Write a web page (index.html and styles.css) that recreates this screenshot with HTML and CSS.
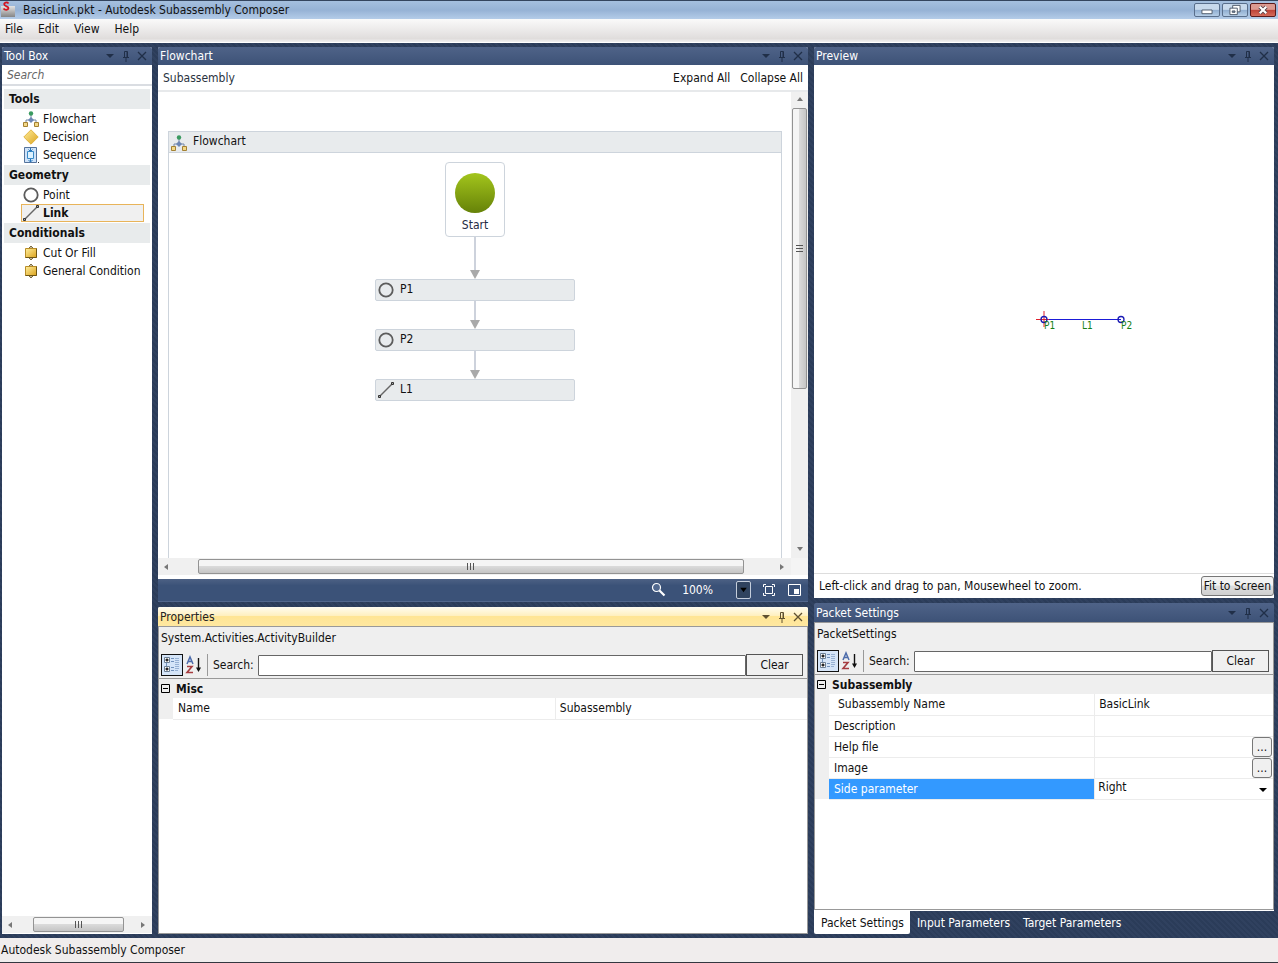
FILE: index.html
```
<!DOCTYPE html>
<html lang="en">
<head>
<meta charset="utf-8">
<title>BasicLink.pkt - Autodesk Subassembly Composer</title>
<link rel="stylesheet" href="styles.css">
</head>
<body>
<svg class="defs" aria-hidden="true">
  <defs>
    <linearGradient id="gold" x1="0" y1="0" x2="1" y2="1"><stop offset="0" stop-color="#ffee9c"/><stop offset="1" stop-color="#dba21c"/></linearGradient>
    <linearGradient id="green" x1="0" y1="0" x2="0" y2="1"><stop offset="0" stop-color="#a3c51c"/><stop offset="1" stop-color="#668208"/></linearGradient>
    <linearGradient id="grey" x1="0" y1="0" x2="0" y2="1"><stop offset="0" stop-color="#e4e4e4"/><stop offset="1" stop-color="#858585"/></linearGradient>
  </defs>
  <symbol id="i-flow" viewBox="0 0 16 16"><path d="M8 3v6M8 9H3v4M8 9h5v4" fill="none" stroke="#7488a8"/><circle cx="8" cy="2.500" r="2.200" fill="#3a9a60"/><path d="M8 6l3 3-3 3-3-3z" fill="#6d86b4"/><path d="M.5 11.500h4v4h-4zM11.500 11.500h4v4h-4z" fill="#f3d888" stroke="#a48132"/></symbol>
  <symbol id="i-decision" viewBox="0 0 16 16"><path d="M8 .8L15.200 8 8 15.200.8 8z" fill="url(#gold)" stroke="#dba92c" stroke-width=".8"/></symbol>
  <symbol id="i-sequence" viewBox="0 0 16 16"><path d="M1.500.5h12v15h-12z" fill="#d0e3f8" stroke="#54739c"/><path d="M4.500 4.500h6v7h-6z" fill="#def2ff" stroke="#3a8bc8"/><path d="M7.500 1v3M7.500 12v3M5.500 13l2 2 2-2M5.500 2.500l2 2 2-2" fill="none" stroke="#2878bd"/><path d="M15 15h1v1h-1z" fill="#333"/></symbol>
  <symbol id="i-point" viewBox="0 0 16 16"><circle cx="8" cy="8" r="6.700" fill="none" stroke="#5c5c5c" stroke-width="1.800"/></symbol>
  <symbol id="i-link" viewBox="0 0 16 16"><path d="M2 14L14 2" stroke="#666" stroke-width="1.400"/><path d="M.5 13.500h2v2h-2zM13.500.5h2v2h-2z" fill="#aaa" stroke="#333"/></symbol>
  <symbol id="i-cond" viewBox="0 0 16 16"><path d="M8 1v14M6 3l2-2 2 2M6 13l2 2 2-2" fill="none" stroke="#7c6c42"/><path d="M2.500 3.500h11v9h-11z" fill="url(#gold)" stroke="#b88d28"/><path d="M2.500 12.500h11v-9" fill="none" stroke="#6e5512"/></symbol>
  <symbol id="i-caret" viewBox="0 0 12 12"><path d="M2 4h8L6 8z" fill="currentColor"/></symbol>
  <symbol id="i-pin" viewBox="0 0 12 12"><path d="M4.500 7V1.500h3V7M3 7.500h6M6 8v4M7 2v5" fill="none" stroke="currentColor"/></symbol>
  <symbol id="i-close" viewBox="0 0 12 12"><path d="M2 2l8 8M10 2l-8 8" fill="none" stroke="currentColor" stroke-width="1.300"/></symbol>
  <symbol id="i-cat" viewBox="0 0 20 20"><path d="M2.500 2.500h5v5h-5zM2.500 11.500h5v5h-5z" fill="#fff" stroke="#6b7f94"/><path d="M3.500 5h3M5 3.500v3M3.500 14h3M5 12.500v3" stroke="#111" stroke-width="1.400"/><path d="M9 3.500h3M9 6.500h3M9 12.500h3M9 15.500h3M4.500 8v3" stroke="#7292bc"/><path d="M13 3.500h4M13 5.500h4M13 7.500h4M13 9.500h4M13 11.500h4M13 13.500h4M13 15.500h3" stroke="#98b2d4"/></symbol>
  <symbol id="i-sort" viewBox="0 0 18 20"><path d="M2 9l3-7 3 7M3 6.500h4" fill="none" stroke="#4d6cab" stroke-width="1.500"/><path d="M2 11.500h5l-5 6h6" fill="none" stroke="#a63c40" stroke-width="1.600"/><path d="M13.500 3v12" stroke="#111" stroke-width="1.400"/><path d="M11 12.500h5l-2.500 4.500z" fill="#111"/></symbol>
</svg>

<div class="app">
  <header class="titlebar">
    <svg class="logo" viewBox="0 0 16 18"><path d="M1 5h14v11H1z" fill="url(#grey)"/><path d="M8.500 2.500C7 .6 3.800 1.600 4.300 3.600S8.800 5.200 8.500 7.200 5 9.500 3.500 7.400" fill="none" stroke="#d31420" stroke-width="1.800"/></svg>
    <h1>BasicLink.pkt - Autodesk Subassembly Composer</h1>
    <div class="window-buttons">
      <button aria-label="Minimize"><svg viewBox="0 0 24 13"><path d="M6.500 6.500h11v4h-11z" fill="#fff" stroke="#4a5666"/></svg></button>
      <button aria-label="Restore"><svg viewBox="0 0 24 13"><path d="M9.500 1.500h8v7h-8z" fill="#fff" stroke="#4a5666"/><path d="M6.500 4.500h8v7h-8z" fill="#fff" stroke="#4a5666"/><path d="M9 7.500h3v1.500H9z" fill="#8296b0" stroke="#4a5666"/></svg></button>
      <button class="quit" aria-label="Close"><svg viewBox="0 0 24 13"><path d="M8.500 3l7 7M15.500 3l-7 7" stroke="#564049" stroke-width="4.200"/><path d="M8.500 3l7 7M15.500 3l-7 7" stroke="#fff" stroke-width="2.400"/></svg></button>
    </div>
  </header>
  <nav class="menubar"><button>File</button><button>Edit</button><button>View</button><button>Help</button></nav>

  <main class="workspace">
    <section class="panel toolbox">
      <div class="panel-head"><h2>Tool Box</h2><button aria-label="Tool Box menu"><svg><use href="#i-caret"/></svg></button><button aria-label="Pin Tool Box"><svg><use href="#i-pin"/></svg></button><button aria-label="Close Tool Box"><svg><use href="#i-close"/></svg></button></div>
      <input class="tool-search" type="text" placeholder="Search" aria-label="Search tools">
      <div class="tools">
        <h3>Tools</h3>
        <ul>
          <li><button><svg><use href="#i-flow"/></svg>Flowchart</button></li>
          <li><button><svg><use href="#i-decision"/></svg>Decision</button></li>
          <li><button><svg><use href="#i-sequence"/></svg>Sequence</button></li>
        </ul>
        <h3>Geometry</h3>
        <ul>
          <li><button><svg><use href="#i-point"/></svg>Point</button></li>
          <li><button class="selected"><svg><use href="#i-link"/></svg>Link</button></li>
        </ul>
        <h3>Conditionals</h3>
        <ul>
          <li><button><svg><use href="#i-cond"/></svg>Cut Or Fill</button></li>
          <li><button><svg><use href="#i-cond"/></svg>General Condition</button></li>
        </ul>
      </div>
      <div class="scroll-h scroll-tools"><i class="arrow left"></i><span class="track"><b class="thumb"></b></span><i class="arrow right"></i></div>
    </section>

    <div class="column">
      <section class="panel flow-panel">
        <div class="panel-head"><h2>Flowchart</h2><button aria-label="Flowchart menu"><svg><use href="#i-caret"/></svg></button><button aria-label="Pin Flowchart"><svg><use href="#i-pin"/></svg></button><button aria-label="Close Flowchart"><svg><use href="#i-close"/></svg></button></div>
        <div class="crumbs"><a href="#root">Subassembly</a><button>Expand All</button><button>Collapse All</button></div>
        <div class="designer">
          <div class="canvas">
            <div class="flowchart">
              <h3><svg><use href="#i-flow"/></svg>Flowchart</h3>
              <div class="nodes">
                <div class="start"><svg viewBox="0 0 42 42"><circle cx="21" cy="21" r="20" fill="url(#green)"/></svg>Start</div>
                <div class="wire long"></div>
                <div class="node"><svg><use href="#i-point"/></svg>P1</div>
                <div class="wire"></div>
                <div class="node"><svg><use href="#i-point"/></svg>P2</div>
                <div class="wire"></div>
                <div class="node"><svg><use href="#i-link"/></svg>L1</div>
              </div>
            </div>
          </div>
          <div class="scroll-v"><i class="arrow up"></i><span class="track"><b class="thumb"></b></span><i class="arrow down"></i></div>
          <div class="scroll-h scroll-flow"><i class="arrow left"></i><span class="track"><b class="thumb"></b></span><i class="arrow right"></i></div>
          <div class="corner"></div>
        </div>
        <div class="zoombar">
          <svg viewBox="0 0 16 16"><circle cx="5.500" cy="5.500" r="4" fill="#52698f" stroke="#fff" stroke-width="1.200"/><path d="M8.500 8.500l5 5" stroke="#fff" stroke-width="2.200"/></svg>
          <span>100%</span>
          <button class="zoom-drop" aria-label="Zoom level"><svg viewBox="0 0 12 12"><path d="M3 4h6L6 8z" fill="#000"/></svg></button>
          <button aria-label="Fit to window"><svg viewBox="0 0 16 16"><path d="M4.500 4.500h7v7h-7zM5 2.500H2.500V5M11 2.500h2.500V5M5 13.500H2.500V11M11 13.500h2.500V11" fill="none" stroke="#fff"/></svg></button>
          <button aria-label="Overview"><svg viewBox="0 0 16 16"><path d="M1.500 2.500h12v11h-12z" fill="none" stroke="#fff"/><path d="M7 7h5v5H7z" fill="#fff"/></svg></button>
        </div>
      </section>

      <section class="panel props active">
        <div class="panel-head"><h2>Properties</h2><button aria-label="Properties menu"><svg><use href="#i-caret"/></svg></button><button aria-label="Pin Properties"><svg><use href="#i-pin"/></svg></button><button aria-label="Close Properties"><svg><use href="#i-close"/></svg></button></div>
        <div class="grid-body">
          <p class="type-name">System.Activities.ActivityBuilder</p>
          <div class="grid-tools">
            <button class="tool on" aria-label="Group by category"><svg><use href="#i-cat"/></svg></button><button class="tool" aria-label="Sort alphabetically"><svg><use href="#i-sort"/></svg></button>
            <label for="find-prop">Search:</label><input id="find-prop" type="text"><button class="clear">Clear</button>
          </div>
          <table>
            <colgroup><col class="gutter"><col class="col-name"><col></colgroup>
            <thead><tr><th colspan="3"><button class="toggle" aria-label="Collapse Misc"><svg viewBox="0 0 9 9"><path d="M.5.5h8v8h-8zM2 4.500h5" fill="none" stroke="#000"/></svg></button>Misc</th></tr></thead>
            <tbody><tr><td class="gut"></td><td>Name</td><td>Subassembly</td></tr></tbody>
          </table>
        </div>
      </section>
    </div>

    <div class="column">
      <section class="panel preview">
        <div class="panel-head"><h2>Preview</h2><button aria-label="Preview menu"><svg><use href="#i-caret"/></svg></button><button aria-label="Pin Preview"><svg><use href="#i-pin"/></svg></button><button aria-label="Close Preview"><svg><use href="#i-close"/></svg></button></div>
        <svg class="drawing" viewBox="0 0 460 508">
          <path d="M230 254.500h77" stroke="#1b1bd8"/>
          <path d="M222 254.500h13M230 246v16" stroke="#e0202c"/>
          <circle cx="230" cy="254.500" r="3" fill="none" stroke="#1b1bb4" stroke-width="1.300"/>
          <circle cx="307" cy="254.500" r="3" fill="none" stroke="#1b1bb4" stroke-width="1.300"/>
          <text x="230" y="264">P1</text><text x="268" y="264">L1</text><text x="307" y="264">P2</text>
        </svg>
        <div class="hint"><span>Left-click and drag to pan, Mousewheel to zoom.</span><button>Fit to Screen</button></div>
      </section>

      <section class="panel packet">
        <div class="panel-head"><h2>Packet Settings</h2><button aria-label="Packet Settings menu"><svg><use href="#i-caret"/></svg></button><button aria-label="Pin Packet Settings"><svg><use href="#i-pin"/></svg></button><button aria-label="Close Packet Settings"><svg><use href="#i-close"/></svg></button></div>
        <div class="grid-body">
          <p class="type-name">PacketSettings</p>
          <div class="grid-tools">
            <button class="tool on" aria-label="Group by category"><svg><use href="#i-cat"/></svg></button><button class="tool" aria-label="Sort alphabetically"><svg><use href="#i-sort"/></svg></button>
            <label for="find-packet">Search:</label><input id="find-packet" type="text"><button class="clear">Clear</button>
          </div>
          <table>
            <colgroup><col class="gutter"><col class="col-name"><col></colgroup>
            <thead><tr><th colspan="3"><button class="toggle" aria-label="Collapse Subassembly"><svg viewBox="0 0 9 9"><path d="M.5.5h8v8h-8zM2 4.500h5" fill="none" stroke="#000"/></svg></button>Subassembly</th></tr></thead>
            <tbody>
              <tr><td class="gut"></td><td class="inset">Subassembly Name</td><td>BasicLink</td></tr>
              <tr><td class="gut"></td><td>Description</td><td></td></tr>
              <tr><td class="gut"></td><td>Help file</td><td class="browse"><button aria-label="Browse help file">...</button></td></tr>
              <tr><td class="gut"></td><td>Image</td><td class="browse"><button aria-label="Browse image">...</button></td></tr>
              <tr class="current"><td class="gut"></td><td><label for="side">Side parameter</label></td><td class="choice"><select id="side"><option>Right</option><option>Left</option><option>None</option></select></td></tr>
            </tbody>
          </table>
        </div>
        <div class="tabs" role="tablist"><button role="tab" aria-selected="true">Packet Settings</button><button role="tab" aria-selected="false">Input Parameters</button><button role="tab" aria-selected="false">Target Parameters</button></div>
      </section>
    </div>
  </main>
  <footer class="statusbar">Autodesk Subassembly Composer</footer>
</div>
</body>
</html>
```
FILE: styles.css
```
* { box-sizing: border-box; }
body, h1, h2, h3, p, ul { margin: 0; padding: 0; }
body {
  font: 12px/16px "DejaVu Sans Condensed", "Noto Sans", sans-serif;
  color: #111;
}
button, input, select { font: inherit; color: inherit; margin: 0; }
button { padding: 0; border: 0; background: none; white-space: nowrap; }
ul { list-style: none; }
svg { display: block; flex: none; width: 16px; height: 16px; }
.defs { position: absolute; width: 0; height: 0; }

.app {
  display: grid;
  grid-template-rows: 19px 24px minmax(0, 1fr) 25px;
  height: 100vh;
  min-width: 960px;
}

.titlebar {
  display: flex;
  align-items: center;
  gap: 7px;
  padding-right: 2px;
  border-top: 1px solid #34455e;
  background: linear-gradient(#a5c0df, #96b2d5 50%, #b4cce8);
}
.titlebar h1 { flex: 1; font-size: 12px; font-weight: normal; }
.logo { height: 18px; }
.window-buttons { display: flex; gap: 2px; }
.window-buttons button {
  width: 26px;
  height: 14px;
  border: 1px solid #596e8b;
  border-radius: 2px;
  background: linear-gradient(#c8d9ec 45%, #8fadd0 50%, #b5cde6);
}
.window-buttons svg { width: 24px; height: 12px; }
.window-buttons .quit { border-color: #5a1a1b; background: linear-gradient(#dc9a91 45%, #bd4237 50%, #d56b5a); }

.menubar {
  display: flex;
  gap: 15px;
  padding: 0 5px 4px;
  border-bottom: 1px solid #fff;
  background: linear-gradient(#fafafa, #e0dddc 85%, #f0f0f0);
}

.workspace {
  display: grid;
  grid-template-columns: 150px minmax(0, 65fr) minmax(0, 46fr);
  gap: 6px;
  padding: 4px 4px 4px 2px;
  min-height: 0;
  background: repeating-linear-gradient(45deg, #2b3c59 0 2px, #30415f 2px 4px);
}
.column { display: flex; flex-direction: column; gap: 5px; min-height: 0; }
.panel { display: flex; flex-direction: column; min-height: 0; min-width: 0; background: #fff; }
.flow-panel { flex: 555 1 0; }
.props { flex: 327 1 0; }
.preview { flex: 551 1 0; }
.packet { flex: 331 1 0; }
.packet, .flow-panel, .props, .preview, .toolbox { border-radius: 2px 2px 0 0; }
.packet { background: none; }

.panel-head {
  display: flex;
  align-items: center;
  flex: none;
  height: 18px;
  padding: 0 2px;
  border-radius: 2px 2px 0 0;
  background: linear-gradient(#4f6388, #3d5277);
  color: #202f48;
}
.panel-head h2 { flex: 1; color: #fff; font-size: 12px; font-weight: normal; }
.panel-head button { width: 16px; display: flex; justify-content: center; }
.panel-head svg { width: 12px; height: 12px; }
.active .panel-head { background: linear-gradient(#fffcf0, #fff0c0 45%, #ffe595 50%, #ffe8a0); color: #5f5030; }
.active .panel-head h2 { color: #222; }
.props .panel-head, .packet .panel-head { height: 19px; }

.tool-search {
  height: 21px;
  width: 100%;
  padding: 1px 5px 0;
  border: 0;
  border-bottom: 2px solid #dadde2;
  border-radius: 0;
  background: #fff;
}
.tool-search::placeholder { color: #666; font-style: italic; opacity: 1; }
.tools { flex: 1; padding: 3px 2px 0; overflow: hidden; }
.tools h3 { height: 20px; padding: 2px 5px; background: #e8ebec; font-size: 12px; }
.tools ul { padding: 1px 0; }
.tools li { padding: 0 6px 0 17px; }
.tools li button { display: flex; align-items: center; gap: 4px; width: 100%; height: 18px; padding: 0 1px; border: 1px solid transparent; }
.tools li .selected { border-color: #e8b45a; background: #f0f0f0; font-weight: bold; }

.scroll-h { display: flex; align-items: center; height: 17px; background: #f0f0f0; }
.scroll-v { display: flex; flex-direction: column; align-items: center; width: 17px; background: #f0f0f0; }
.track { flex: 1; display: flex; }
.thumb { display: block; border: 1px solid #939393; border-radius: 2px; }
.scroll-h .thumb {
  height: 15px;
  background: repeating-linear-gradient(90deg, #555 0 1px, transparent 1px 3px) center / 8px 7px no-repeat, linear-gradient(#f5f5f5 45%, #dadada 50%, #c5c5c5);
}
.scroll-v .thumb {
  width: 15px;
  background: repeating-linear-gradient(#555 0 1px, transparent 1px 3px) center / 7px 8px no-repeat, linear-gradient(90deg, #f5f5f5 45%, #dadada 50%, #c5c5c5);
}
.arrow { flex: none; border: 3px solid transparent; }
.arrow.left { margin: 0 6px 0 3px; border-right: 4px solid #777; }
.arrow.right { margin: 0 4px 0 6px; border-left: 4px solid #777; }
.arrow.up { margin: 2px 0 7px; border-bottom: 4px solid #777; }
.arrow.down { margin: 6px 0 4px; border-top: 4px solid #777; }
.scroll-tools { margin-bottom: 1px; }
.scroll-tools .thumb { width: 78%; margin-left: 13%; }
.scroll-flow .thumb { width: 91%; margin-left: 4%; }
.scroll-v .track { min-height: 0; }
.scroll-v .thumb { height: 65%; }

.crumbs {
  display: flex;
  align-items: center;
  gap: 10px;
  flex: none;
  height: 27px;
  padding: 0 5px;
  border-bottom: 2px solid #e7e9eb;
}
.crumbs a { flex: 1; color: #2a3340; text-decoration: none; }
.designer { flex: 1; min-height: 0; display: grid; grid-template: minmax(0, 1fr) 17px / minmax(0, 1fr) 17px; }
.canvas { padding: 39px 9px 0 10px; overflow: hidden; }
.corner { background: #f4f4f4; }
.flowchart { height: 100%; border: 1px solid #cdd4dc; border-bottom: 0; }
.flowchart h3 {
  display: flex;
  gap: 6px;
  height: 21px;
  padding: 1px 2px;
  border-bottom: 1px solid #cdd4dc;
  background: #e8ebed;
  font-size: 12px;
  font-weight: normal;
}
.flowchart h3 svg { align-self: flex-end; }
.nodes { display: flex; flex-direction: column; align-items: center; padding-top: 9px; }
.start {
  display: flex;
  flex-direction: column;
  align-items: center;
  gap: 3px;
  width: 60px;
  height: 75px;
  padding-top: 9px;
  border: 1px solid #cdd4dc;
  border-radius: 4px;
  color: #1f2c44;
}
.start svg { width: 42px; height: 42px; }
.wire { width: 10px; height: 28px; display: flex; flex-direction: column; align-items: center; }
.wire.long { height: 42px; }
.wire::before { content: ""; flex: 1; width: 2px; background: #cdd2dc; }
.wire::after { content: ""; border: 5px solid transparent; border-top: 9px solid #a9a9a9; border-bottom: 0; }
.node {
  display: flex;
  gap: 6px;
  width: 200px;
  height: 22px;
  padding: 1px 2px;
  border: 1px solid #cdd4dc;
  border-radius: 2px;
  background: #e8ebed;
}
.node svg { align-self: center; }

.zoombar {
  display: flex;
  align-items: center;
  justify-content: flex-end;
  flex: none;
  height: 23px;
  margin-top: 4px;
  padding-right: 5px;
  border-bottom: 1px solid #52678c;
  background: linear-gradient(#4d6184, #3b5278 30%);
  color: #fff;
}
.zoombar span { margin: 0 23px 0 15px; }
.zoombar button + button { margin-left: 10px; }
.zoom-drop { width: 15px; height: 18px; border: 1px solid #c4cddb; border-radius: 2px; background: #30435f; }
.zoom-drop svg { width: 13px; }

.grid-body { flex: 1; min-height: 0; border: 1px solid #999; background: #fff; overflow: hidden; }
.type-name { padding: 3px 2px 5px; height: 27px; background: #efefef; }
.grid-tools {
  display: flex;
  height: 25px;
  padding: 0 4px 2px 2px;
  border-bottom: 1px solid #999;
  background: #efefef;
}
.grid-tools .tool { width: 22px; height: 22px; display: flex; align-items: center; justify-content: center; }
.grid-tools .on { border: 1px solid #111; background: #d5e5f8; }
.grid-tools svg { width: 20px; height: 20px; }
.grid-tools label { margin-left: 2px; padding: 3px 4px 3px 5px; border-left: 1px solid #999; }
.grid-tools input { flex: 1; min-width: 0; height: 21px; margin-top: 1px; padding: 0 4px; border: 1px solid #666; border-radius: 1px; background: #fff; }
.grid-tools .clear { width: 57px; border: 1px solid #555; background: #f0f0f0; }

table { width: 100%; table-layout: fixed; border-collapse: collapse; }
.gutter { width: 14px; }
.col-name { width: 58%; }
.props .col-name { width: 59%; }
th { height: 19px; padding: 0 2px; text-align: left; background: #efefef; }
.toggle { margin-right: 6px; }
.toggle svg { width: 9px; height: 9px; }
td { height: 21px; padding: 0 4px; border-bottom: 1px solid #ececec; border-left: 1px solid #ececec; }
td.gut { padding: 0; border: 0; background: #efefef; }
.gut + td { border-left: 0; padding-left: 5px; }
.packet .inset { padding-left: 9px; }
td.browse { padding: 0 1px; text-align: right; }
.browse button { display: block; width: 20px; height: 20px; margin-left: auto; border: 1px solid #777; border-radius: 3px; background: #f0f0f0; }
.current .gut + td { background: #3399ff; color: #fff; }
td.choice { position: relative; padding: 0 4px 0 3px; }
.choice select {
  display: block;
  width: 100%;
  height: 20px;
  padding: 0 0 4px;
  border: 0;
  appearance: none;
  background: none;
}
.choice::after { content: ""; position: absolute; right: 6px; top: 9px; border: 4px solid transparent; border-top-color: #000; border-bottom: 0; pointer-events: none; }

.drawing { flex: 1; width: 100%; min-height: 0; }
.drawing text { font-size: 10px; fill: #168016; }
.hint { display: flex; align-items: center; flex: none; height: 25px; padding-left: 5px; border-top: 1px solid #ddd; }
.hint span { flex: 1; }
.hint button { height: 20px; padding: 0 2px; border: 1px solid #777; border-radius: 3px; background: linear-gradient(#f3f3f3 45%, #dddddd 50%, #d0d0d0); }

.tabs { display: flex; flex: none; height: 24px; border-top: 1px solid #fff; color: #fff; }
.tabs button { padding: 0 6px 0 7px; }
.tabs [aria-selected="true"] { background: #fff; color: #111; border-radius: 0 0 2px 2px; }
.statusbar { padding: 4px 1px; border-bottom: 1px solid #33363f; background: #f0eded; }
```
